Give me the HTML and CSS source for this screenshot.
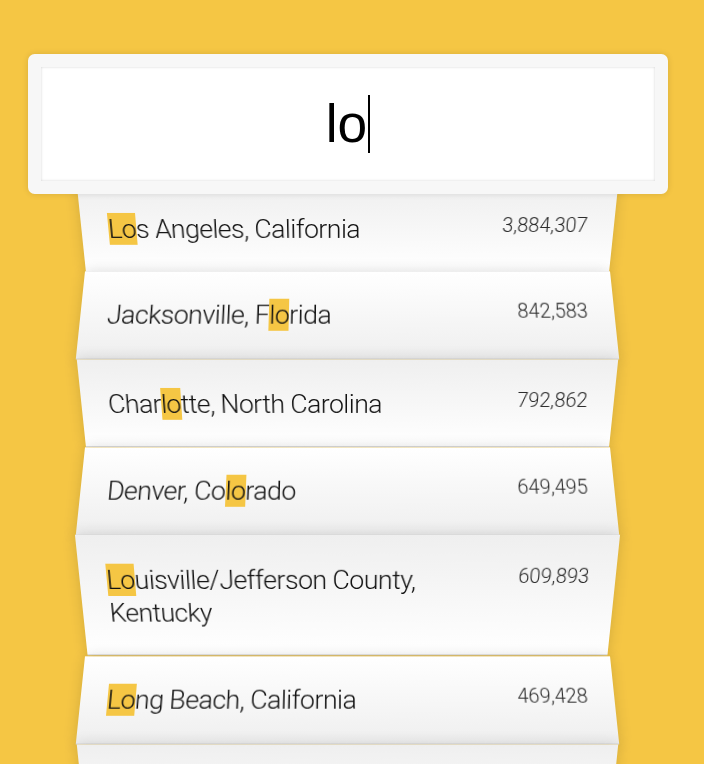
FILE: index.html
```html
<!DOCTYPE html>
<html lang="en">
<head>
<meta charset="utf-8">
<title>Type Ahead</title>
<link rel="stylesheet" href="styles.css">
</head>
<body>
<form class="search-form">
  <div class="search"><span class="search-text">lo</span><span class="caret"></span></div>
  <ul class="suggestions">
    <li><span class="name"><span class="hl">Lo</span>s Angeles, California</span><span class="population">3,884,307</span></li>
    <li><span class="name">Jacksonville, F<span class="hl">lo</span>rida</span><span class="population">842,583</span></li>
    <li><span class="name">Char<span class="hl">lo</span>tte, North Carolina</span><span class="population">792,862</span></li>
    <li><span class="name">Denver, Co<span class="hl">lo</span>rado</span><span class="population">649,495</span></li>
    <li><span class="name"><span class="hl">Lo</span>uisville/Jefferson County, Kentucky</span><span class="population">609,893</span></li>
    <li><span class="name"><span class="hl">Lo</span>ng Beach, California</span><span class="population">469,428</span></li>
    <li><span class="name">Co<span class="hl">lo</span>rado Springs, Colorado</span><span class="population">439,886</span></li>
  </ul>
</form>
</body>
</html>
```

FILE: styles.css
```css
html {
  box-sizing: border-box;
  background: #f5c644;
}
*, *::before, *::after {
  box-sizing: inherit;
}
body {
  margin: 0;
  padding-right: 8px;
  font-family: Roboto, "Liberation Sans", Arial, sans-serif;
  font-size: 26.67px;
  font-weight: 300;
  color: #111;
}
.search-form {
  width: 533.33px;
  margin: 0 auto;
  padding-top: 40.67px;
}
.search {
  position: relative;
  z-index: 2;
  width: 640px;
  height: 140px;
  margin: 13.33px 0 -13.33px -53.33px;
  display: flex;
  justify-content: center;
  align-items: center;
  background: #fff;
  border: 13.33px solid #f7f7f7;
  border-radius: 6.67px;
  box-shadow: 0 0 6.67px rgba(0, 0, 0, 0.12), inset 0 0 2.67px rgba(0, 0, 0, 0.19);
  font-family: "Liberation Sans", Arial, sans-serif;
  font-weight: 400;
  font-size: 53.33px;
  color: #000;
}
.search-text {
  line-height: 1;
}
.caret {
  width: 2px;
  height: 58px;
  margin-left: 1px;
  background: #000;
}
.suggestions {
  margin: 0;
  padding: 0;
  list-style: none;
}
.suggestions li {
  display: flex;
  justify-content: space-between;
  margin: 0;
  padding: 28px 26.67px 25.33px;
  line-height: 1.255;
  background: #fff;
  border-bottom: 1.33px solid #d8d8d8;
  box-shadow: 0 0 13.33px rgba(0, 0, 0, 0.14);
}
.suggestions li:nth-child(odd) {
  transform: perspective(133.33px) rotateX(-3deg) translateY(4px);
  background: linear-gradient(to top, #ffffff 0%, #efefef 100%);
}
.suggestions li:nth-child(even) {
  transform: perspective(133.33px) rotateX(3deg) translateY(2.67px) scale(1.001);
  background: linear-gradient(to bottom, #ffffff 0%, #efefef 100%);
}
.name {
  max-width: 410px;
  letter-spacing: -0.55px;
}
.population {
  font-size: 20px;
  color: #2a2a2a;
  flex-shrink: 0;
}
.hl {
  background: #f5c644;
}
```
